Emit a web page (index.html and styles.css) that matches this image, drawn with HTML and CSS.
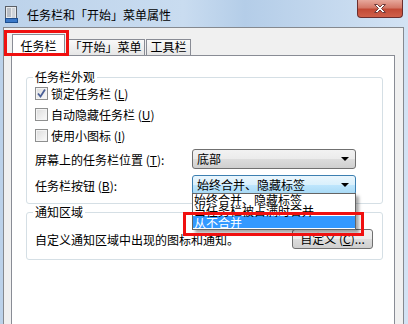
FILE: index.html
```html
<!DOCTYPE html>
<html lang="zh-CN">
<head>
  <meta charset="UTF-8" />
  <title>任务栏和「开始」菜单属性</title>
  <link rel="stylesheet" href="styles.css">
</head>
<body>
  <div class="window">
    <div class="titlebar">
      <svg class="app-icon" width="13" height="17" viewBox="0 0 13 17">
        <rect x="0.5" y="0.5" width="11" height="15" fill="#e8eaec" stroke="#5a5f66"/>
        <rect x="2" y="2" width="4" height="9" fill="#b8bec6"/>
        <rect x="7" y="2" width="3" height="11" fill="#cfd4da"/>
        <rect x="0.5" y="12.5" width="12" height="4" fill="#3a78c8" stroke="#1d4e8f"/>
      </svg>
      <span class="title">任务栏和「开始」菜单属性</span>
      <div class="close">
        <svg width="14" height="11" viewBox="0 0 14 11">
          <path d="M1.5 1.5 L4.5 1.5 L7 4 L9.5 1.5 L12.5 1.5 L8.5 5.5 L12.5 9.5 L9.5 9.5 L7 7 L4.5 9.5 L1.5 9.5 L5.5 5.5 Z" fill="#ffffff" stroke="#6e3a3a" stroke-width="1"/>
        </svg>
      </div>
    </div>

    <div class="client">
      <div class="tabs">
        <div class="tab active">任务栏</div>
        <div class="tab tab-start">「开始」菜单</div>
        <div class="tab tab-tools">工具栏</div>
      </div>

      <div class="page">
        <fieldset class="group looks">
          <legend>任务栏外观</legend>
          <div class="check">
            <span class="box">
              <svg width="11" height="11" viewBox="0 0 11 11">
                <path d="M2 5.5 L4.5 8.5 L9 1.5" fill="none" stroke="#4a5f97" stroke-width="1.8"/>
              </svg>
            </span>
            锁定任务栏 (<u>L</u>)
          </div>
          <div class="check"><span class="box"></span>自动隐藏任务栏 (<u>U</u>)</div>
          <div class="check"><span class="box"></span>使用小图标 (<u>I</u>)</div>
          <div class="field first">
            <span class="field-label">屏幕上的任务栏位置 (<u>T</u>):</span>
            <div class="select">底部<span class="arrow"></span></div>
          </div>
          <div class="field">
            <span class="field-label">任务栏按钮 (<u>B</u>):</span>
            <div class="select focus">始终合并、隐藏标签<span class="arrow"></span></div>
          </div>
        </fieldset>

        <fieldset class="group notify">
          <legend>通知区域</legend>
          <div class="notify-row">
            <span>自定义通知区域中出现的图标和通知。</span>
            <div class="button">自定义 (<u>C</u>)...</div>
          </div>
        </fieldset>
      </div>
    </div>

    <div class="dropdown">
      <div class="item">始终合并、隐藏标签</div>
      <div class="item">当任务栏被占满时合并</div>
      <div class="item selected">从不合并</div>
    </div>

    <div class="mark mark-tab"></div>
    <div class="mark mark-item"></div>
  </div>
</body>
</html>
```

FILE: styles.css
```css
* {
  margin: 0;
  padding: 0;
  box-sizing: border-box;
}

html, body {
  height: 100%;
  font-family: "Noto Sans CJK SC", "Liberation Sans", sans-serif;
  font-size: 12px;
  color: #000;
  background: #c3d8ee;
  overflow: hidden;
}

u {
  text-decoration: underline;
}

.window {
  position: relative;
  width: 408px;
  height: 324px;
  display: flex;
  flex-direction: column;
  background: linear-gradient(90deg, #bcd2ea 0%, #c9dcf0 45%, #b4cde8 60%, #d3e3f4 100%);
}

/* Title bar */
.titlebar {
  height: 27px;
  display: flex;
  align-items: center;
  padding-left: 5px;
  flex-shrink: 0;
}

.app-icon {
  margin-right: 9px;
  margin-top: 1px;
}

.title {
  line-height: 14px;
  margin-top: 2px;
}

.close {
  margin-left: auto;
  margin-right: 5px;
  align-self: flex-start;
  width: 46px;
  height: 18px;
  border: 1px solid #6b2e2e;
  border-top: none;
  border-radius: 0 0 4px 4px;
  background: linear-gradient(#e7a89c 0%, #d47868 45%, #c24a36 55%, #d0604a 100%);
  display: flex;
  align-items: center;
  justify-content: center;
}

/* Client area */
.client {
  flex: 1;
  margin-left: 3px;
  width: 401px;
  border: 1px solid #85898f;
  border-bottom: none;
  background: #f0f0f0;
  padding-top: 3px;
  display: flex;
  flex-direction: column;
}

.tabs {
  display: flex;
  align-items: flex-end;
  height: 25px;
  padding-left: 8px;
  margin-bottom: -1px;
  position: relative;
  z-index: 1;
}

.tab {
  height: 16px;
  margin-bottom: 1px;
  border: 1px solid #898c95;
  border-bottom: none;
  background: linear-gradient(#f9f9f9, #e6e6e6);
  line-height: 14px;
  text-align: center;
  white-space: nowrap;
}

.tab.active {
  width: 53px;
  height: 22px;
  margin-bottom: 0;
  background: #fff;
  line-height: 22px;
}

.tab-start {
  width: 79px;
  margin-left: 1px;
}

.tab-tools {
  width: 45px;
  margin-left: 1px;
}

.page {
  flex: 1;
  margin-left: 7px;
  width: 384px;
  background: #fff;
  border: 1px solid #898c95;
  border-bottom: none;
  padding: 15px 0 0 14px;
}

/* Group boxes */
.group {
  width: 357px;
  border: 1px solid #d5dfe5;
  border-radius: 3px;
  padding: 0 9px 8px 8px;
  min-inline-size: 0;
}

.group legend {
  line-height: 12px;
  padding: 0 2px;
  margin-left: -2px;
}

.check {
  height: 21px;
  display: flex;
  align-items: center;
  white-space: nowrap;
}

.box {
  width: 13px;
  height: 13px;
  border: 1px solid #8e8f8f;
  background: linear-gradient(135deg, #dcdcdc, #fbfbfb);
  box-shadow: inset 0 0 0 1px #f4f4f4;
  margin-right: 3px;
  display: flex;
  align-items: center;
  justify-content: center;
}

.field {
  display: flex;
  align-items: center;
  height: 20px;
  margin-top: 6px;
}

.field.first {
  margin-top: 3px;
}

.field-label {
  flex: 0 0 157px;
  white-space: nowrap;
}

.select {
  width: 164px;
  height: 20px;
  border: 1px solid #707070;
  border-radius: 3px;
  background: linear-gradient(#f2f2f2 0%, #ebebeb 50%, #dddddd 50%, #cfcfcf 100%);
  padding-left: 4px;
  line-height: 18px;
  display: flex;
  align-items: center;
}

.select.focus {
  border-color: #3c7fb1;
  background: linear-gradient(#eaf6fd 0%, #d9f0fc 50%, #bee6fd 50%, #a7d9f5 100%);
}

.arrow {
  margin-left: auto;
  margin-right: 6px;
  width: 0;
  height: 0;
  border-left: 4px solid transparent;
  border-right: 4px solid transparent;
  border-top: 4px solid #000;
}

.notify {
  margin-top: 2px;
  padding-bottom: 10px;
}

.notify-row {
  display: flex;
  align-items: center;
  margin-top: 11px;
  height: 20px;
  white-space: nowrap;
}

.button {
  margin-left: auto;
  width: 81px;
  height: 20px;
  border: 1px solid #707070;
  border-radius: 3px;
  background: linear-gradient(#f2f2f2 0%, #ebebeb 50%, #dddddd 50%, #cfcfcf 100%);
  text-align: center;
  line-height: 18px;
}

/* Open dropdown list */
.dropdown {
  position: absolute;
  left: 192px;
  top: 193px;
  width: 164px;
  height: 37px;
  background: #fff;
  border: 1px solid #646464;
  box-shadow: 3px 3px 3px rgba(0, 0, 0, 0.35);
  z-index: 5;
}

.dropdown .item {
  height: 11px;
  line-height: 12px;
  padding-left: 1px;
  white-space: nowrap;
}

.dropdown .item.selected {
  height: 12px;
  background: #3399ff;
  color: #fff;
  line-height: 13px;
}

/* Red annotation boxes */
.mark {
  position: absolute;
  border: 3px solid #f01010;
  z-index: 6;
}

.mark-tab {
  left: 4px;
  top: 30px;
  width: 65px;
  height: 26px;
}

.mark-item {
  left: 183px;
  top: 212px;
  width: 181px;
  height: 24px;
}
```
